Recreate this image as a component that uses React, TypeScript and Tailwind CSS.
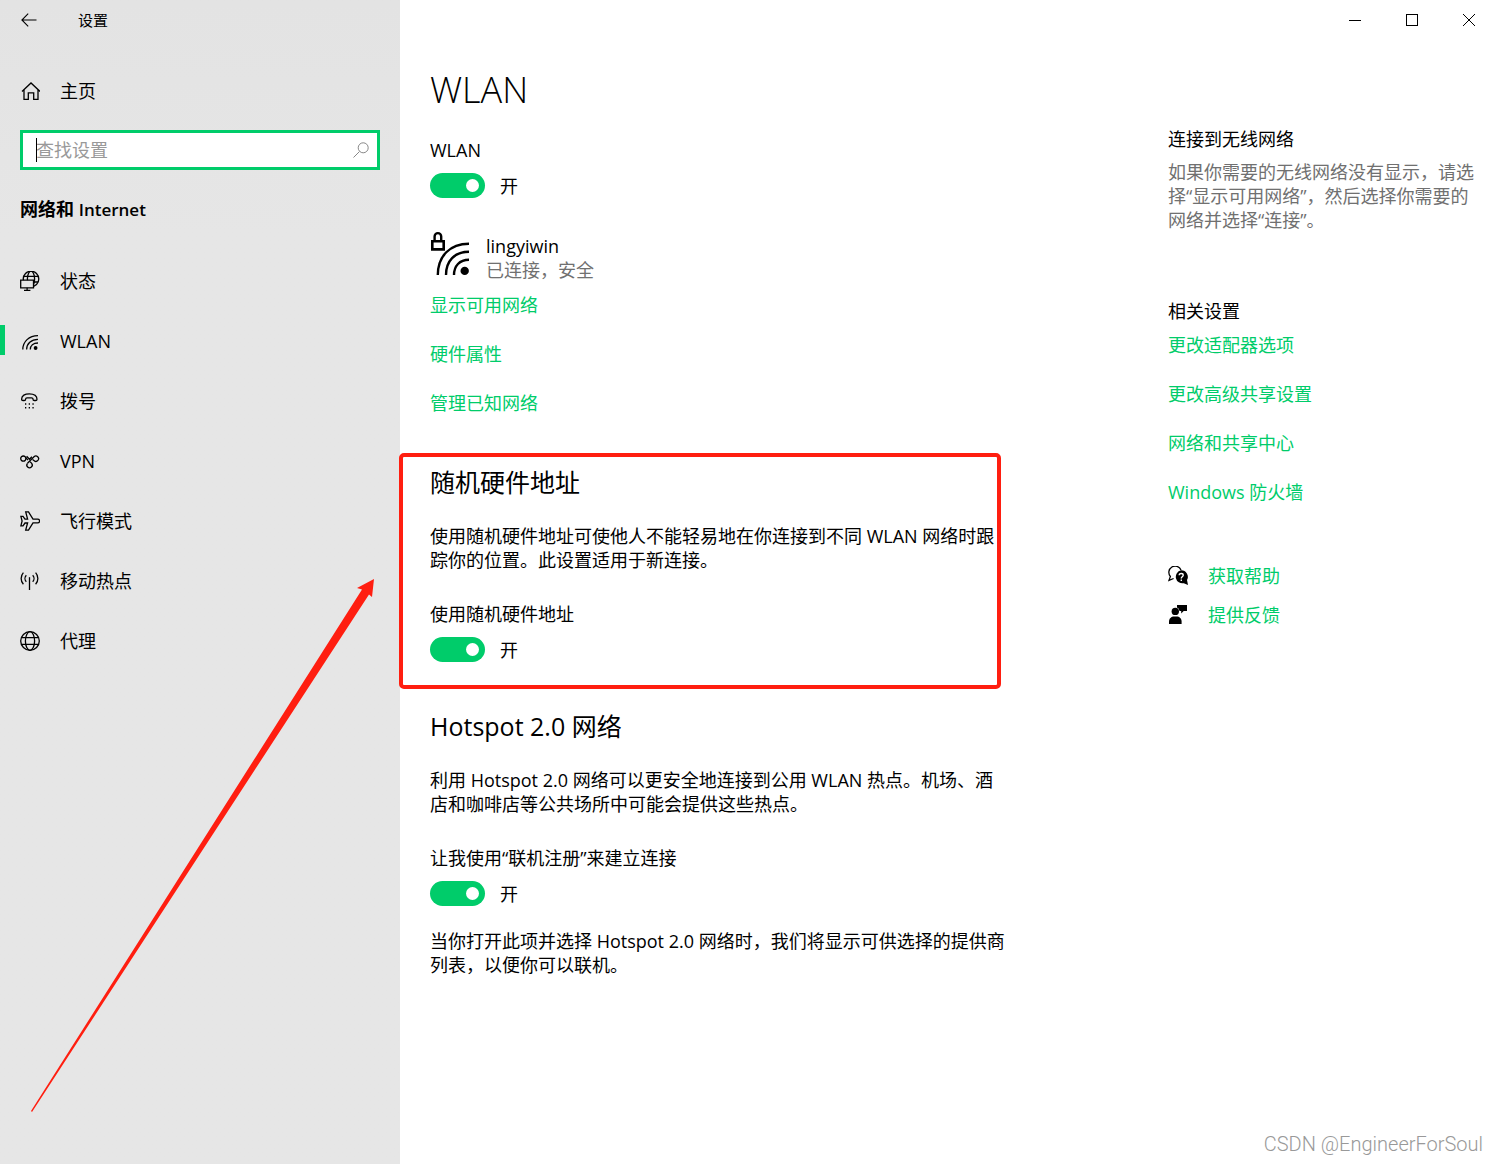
import React from "react";

function Icon({ children }: { children: React.ReactNode }) {
  return (
    <svg
      viewBox="0 0 20 20"
      className="h-5 w-5 shrink-0"
      fill="none"
      stroke="currentColor"
      strokeWidth="1.3"
      aria-hidden="true"
    >
      {children}
    </svg>
  );
}

const HomeIcon = () => (
  <Icon>
    <path d="M2 10.5 11 2l9 8.5M4 9v9.4h4.3v-6.6h5.4v6.6H18V9" />
  </Icon>
);

const StatusIcon = () => (
  <Icon>
    <circle cx="11" cy="8" r="7.8" />
    <ellipse cx="11" cy="8" rx="3.6" ry="7.8" />
    <path d="M4 5.3h14M11 11h7" />
    <path d="M.7 9.2h12.8v7.6H.7z" fill="#e6e6e6" />
    <path d="M7.1 16.8v2.6M4 19.4h6.4" />
  </Icon>
);

const WlanIcon = () => (
  <Icon>
    <path d="M2.8 18.6C2.8 10.6 9 4.6 18 4.6M6.6 18.6c0-6 4.6-10.2 11.4-10.2M10.3 18.6c0-4 3-6.6 7.7-6.6" />
    <circle cx="15.6" cy="17" r="1.9" fill="currentColor" stroke="none" />
  </Icon>
);

const DialIcon = () => (
  <Icon>
    <path d="M1.6 8.2C1.6 4.6 5 2.8 9.3 2.8S17 4.6 17 8.2c0 1-.6 1.3-1.4 1.3h-1.2c-1 0-1.4-.5-1.4-1.3 0-.9-.5-1.3-1.4-1.3H7c-.9 0-1.4.4-1.4 1.3 0 .8-.4 1.3-1.4 1.3H3c-.8 0-1.4-.3-1.4-1.3Z" />
    <path d="M5 13h1.3M8.7 13H10M12.4 13h1.3M5 16.8h1.3M8.7 16.8H10M12.4 16.8h1.3" strokeWidth="1.4" />
  </Icon>
);

const VpnIcon = () => (
  <Icon>
    <circle cx="3.3" cy="7.6" r="2.6" />
    <path d="M5.6 6.3 8 9.2" />
    <path d="m6.6 5.3 2.9 3 2.4-2.6" />
    <path d="M7.5 12.3 14 5.7a2.7 2.7 0 1 1 .2 4.1L12.6 8.600" />
    <path d="M7.500 12.300a2.700 2.700 0 1 0 4.200.1L10 10.600" />
  </Icon>
);

const PlaneIcon = () => (
  <Icon>
    <path d="M5.7.8h2.8l4.5 7.300h4.600c1.200 0 2 .8 2 1.900s-.8 1.900-2 1.900H13l-4.500 7.300H5.700L7.600 12H5l-2 2.800H.9L2.100 10 .9 5.300H3L5 8.100h2.600Z" />
  </Icon>
);

const HotspotIcon = () => (
  <Icon>
    <path d="M9.5 6.2V19" />
    <path d="M6.300 4.200a4.700 4.700 0 0 0 0 6.500M12.700 4.200a4.700 4.700 0 0 1 0 6.500M3.400 1.600a8.600 8.600 0 0 0 0 11.600M15.600 1.600a8.600 8.600 0 0 1 0 11.600" />
  </Icon>
);

const ProxyIcon = () => (
  <Icon>
    <circle cx="10" cy="10" r="9.3" />
    <ellipse cx="10" cy="10" rx="4.6" ry="9.3" />
    <path d="M1.5 6.7h17M1.5 13.3h17" />
  </Icon>
);

const navItems = [
  { label: "状态", icon: <StatusIcon /> },
  { label: "WLAN", icon: <WlanIcon />, current: true },
  { label: "拨号", icon: <DialIcon /> },
  { label: "VPN", icon: <VpnIcon /> },
  { label: "飞行模式", icon: <PlaneIcon /> },
  { label: "移动热点", icon: <HotspotIcon /> },
  { label: "代理", icon: <ProxyIcon /> },
];

function Sidebar() {
  return (
    <aside className="w-[400px] shrink-0 bg-linear-to-b from-[#e3e3e3] via-[#e6e6e6] via-20% to-[#e6e6e6]">
      <div className="flex h-10 items-center">
        <button type="button" aria-label="返回" className="flex h-10 w-[58px] items-center justify-center">
          <svg viewBox="0 0 16 14" className="h-3.5 w-4" fill="none" stroke="currentColor" strokeWidth="1.1" aria-hidden="true">
            <path d="M15.5 7H1M7.2.7.9 7l6.300 6.300" />
          </svg>
        </button>
        <span className="ml-5 text-[15px]">设置</span>
      </div>
      <a href="#home" className="mt-[31px] flex h-10 items-center gap-5 px-5">
        <HomeIcon />
        主页
      </a>
      <div className="relative mx-5 mt-[19px] flex h-10 items-center border-3 border-[#00cc6a] bg-white">
        <input
          type="text"
          aria-label="查找设置"
          placeholder="查找设置"
          className="h-full min-w-0 flex-1 pl-[13px] outline-none placeholder:text-[#999]"
        />
        <span className="absolute left-[13px] h-6 w-px bg-black" />
        <button type="button" aria-label="搜索" className="flex h-full w-8 items-center justify-center text-[#888]">
          <svg viewBox="0 0 16 16" className="h-4 w-4" fill="none" stroke="currentColor" aria-hidden="true">
            <circle cx="10.2" cy="5.8" r="5" />
            <path d="m6.5 9.5-6 6" />
          </svg>
        </button>
      </div>
      <h2 className="mx-5 mt-6 leading-[30px] font-bold">
        网络和 <span className="text-[17px] leading-none font-semibold">Internet</span>
      </h2>
      <nav className="mt-[27px]">
        {navItems.map((item) => (
          <a
            key={item.label}
            href="#section"
            aria-current={item.current ? "page" : undefined}
            className="relative flex h-[60px] items-center gap-5 px-5"
          >
            {item.current && <span className="absolute top-[14px] left-0 h-[30px] w-[5px] bg-[#00cc6a]" />}
            {item.icon}
            {item.label}
          </a>
        ))}
      </nav>
    </aside>
  );
}

function Toggle({ id, label }: { id: string; label: string }) {
  return (
    <>
      <label htmlFor={id} className="block">
        {label}
      </label>
      <div className="mt-[11px] flex h-[25px] items-center gap-[15px]">
        <input
          id={id}
          type="checkbox"
          role="switch"
          defaultChecked
          className="flex h-[25px] w-[55px] appearance-none items-center justify-end rounded-full bg-[#999] pr-[6px] before:h-[13px] before:w-[13px] before:rounded-full before:bg-white checked:bg-[#00cc6a]"
        />
        <span>开</span>
      </div>
    </>
  );
}

function GreenLink({ children }: { children: React.ReactNode }) {
  return (
    <a href="#link" className="w-fit text-[#00cc6a]">
      {children}
    </a>
  );
}

function WindowControls() {
  return (
    <div className="flex h-10 justify-end pr-px">
      <button type="button" aria-label="最小化" className="flex w-[57px] items-center justify-center">
        <span className="h-px w-3 bg-black" />
      </button>
      <button type="button" aria-label="最大化" className="flex w-[57px] items-center justify-center">
        <span className="h-3 w-3 border border-black" />
      </button>
      <button type="button" aria-label="关闭" className="flex w-[57px] items-center justify-center">
        <svg viewBox="0 0 12 12" className="h-3 w-3" stroke="currentColor" aria-hidden="true">
          <path d="m0 0 12 12M12 0 0 12" />
        </svg>
      </button>
    </div>
  );
}

function Content() {
  return (
    <div className="w-[578px]">
      <h1 className="text-[36px] leading-[50px] font-light">WLAN</h1>
      <section className="mt-[23px]">
        <Toggle id="wlan" label="WLAN" />
        <div className="mt-9 flex">
          <svg
            viewBox="0 0 40 46"
            className="h-[46px] w-10 shrink-0 overflow-visible"
            fill="none"
            stroke="currentColor"
            aria-hidden="true"
          >
            <path d="M2.3 7.3h11.4v8.1H2.3z" strokeWidth="2.6" />
            <path d="M4.6 7V2.4a3.3 3.3 0 0 1 6.6 0V7" strokeWidth="2.4" />
            <path
              d="M7.8 41C7.8 22 20 9.700 39 9.700M16 41c0-14 8.500-23.300 23-23.300M24 41c0-9 5.500-15.300 15-15.300"
              strokeWidth="2.400"
            />
            <circle cx="34.700" cy="36.900" r="4.200" fill="currentColor" stroke="none" />
          </svg>
          <div className="ml-4">
            <p>lingyiwin</p>
            <p className="text-[#707070]">已连接，安全</p>
          </div>
        </div>
        <div className="mt-[11px] flex flex-col gap-[25px]">
          <GreenLink>显示可用网络</GreenLink>
          <GreenLink>硬件属性</GreenLink>
          <GreenLink>管理已知网络</GreenLink>
        </div>
      </section>

      <section className="relative mt-[38px] pt-[11px] pb-[27px]">
        <div className="pointer-events-none absolute inset-y-0 right-[7px] -left-[31px] rounded-[5px] border-4 border-[#ff1e10]" />
        <h2 className="text-[25px] leading-9">随机硬件地址</h2>
        <p className="mt-6">
          使用随机硬件地址可使他人不能轻易地在你连接到不同 WLAN 网络时跟踪你的位置。此设置适用于新连接。
        </p>
        <div className="mt-[30px]">
          <Toggle id="random" label="使用随机硬件地址" />
        </div>
      </section>

      <section className="mt-[19px]">
        <h2 className="text-[25px] leading-9">Hotspot 2.0 网络</h2>
        <p className="mt-6">
          利用 Hotspot 2.0 网络可以更安全地连接到公用 WLAN 热点。机场、酒店和咖啡店等公共场所中可能会提供这些热点。
        </p>
        <div className="mt-[30px]">
          <Toggle id="hotspot" label="让我使用“联机注册”来建立连接" />
        </div>
        <p className="mt-[23px]">
          当你打开此项并选择 Hotspot 2.0 网络时，我们将显示可供选择的提供商列表，以便你可以联机。
        </p>
      </section>
    </div>
  );
}

function RelatedPanel() {
  return (
    <aside className="mt-[62px] w-[310px] shrink-0">
      <h3>连接到无线网络</h3>
      <p className="mt-[9px] text-[#707070]">
        如果你需要的无线网络没有显示，请选择“显示可用网络”，然后选择你需要的网络并选择“连接”。
      </p>
      <h3 className="mt-[67px]">相关设置</h3>
      <div className="mt-[10px] flex flex-col gap-[25px]">
        <GreenLink>更改适配器选项</GreenLink>
        <GreenLink>更改高级共享设置</GreenLink>
        <GreenLink>网络和共享中心</GreenLink>
        <GreenLink>Windows 防火墙</GreenLink>
      </div>
      <div className="mt-[60px] flex flex-col gap-[15px]">
        <div className="flex items-center gap-5">
          <Icon>
            <path d="M5.6 12.500 1 14.400l1.400-3.900A6.300 6.300 0 1 1 13 4" />
            <path
              d="M13 4.300a6.600 6.600 0 0 1 6 9.800l1 4.900-4.200-1.800A6.600 6.600 0 1 1 13 4.300Z"
              fill="currentColor"
              stroke="none"
            />
            <path d="M11.200 9.300c0-2.500 4-2.300 4-.1 0 1.600-1.900 1.500-1.900 3.200M13.300 13.400v1.500" stroke="white" strokeWidth="1.400" />
          </Icon>
          <GreenLink>获取帮助</GreenLink>
        </div>
        <div className="flex items-center gap-5">
          <Icon>
            <g fill="currentColor" stroke="none" transform="translate(0 -1)">
              <path d="M9 0h10v7h-3.300l-2.500 2.500V7H11.500A4.300 4.300 0 0 0 9 3.600Z" />
              <circle cx="7.300" cy="7.400" r="3.700" />
              <path d="M1 20v-2.600c0-3 2.400-5 5-5h2.600c2.800 0 5 2 5 5V20Z" />
            </g>
          </Icon>
          <GreenLink>提供反馈</GreenLink>
        </div>
      </div>
    </aside>
  );
}

export default function App() {
  return (
    <div
      lang="zh-CN"
      className="relative flex min-h-screen overflow-hidden bg-white font-['Open_Sans','Noto_Sans_CJK_SC',sans-serif] text-[18px] leading-6 text-black"
    >
      <Sidebar />
      <main className="min-w-0 flex-1">
        <WindowControls />
        <div className="mt-[25px] flex justify-between gap-8 pr-5 pl-[30px]">
          <Content />
          <RelatedPanel />
        </div>
      </main>
      <svg
        viewBox="0 0 344 533"
        className="pointer-events-none absolute top-[579px] left-[31px] h-[533px] w-[344px]"
        fill="#ff1e10"
        aria-hidden="true"
      >
        <path d="M343 0 341 18 338 15.500 1 533 0 532 331 10.500 326 9Z" />
      </svg>
      <div className="pointer-events-none absolute right-[15px] bottom-2 font-[Roboto,sans-serif] text-[20px] font-light text-[#999]">
        CSDN @EngineerForSoul
      </div>
    </div>
  );
}
